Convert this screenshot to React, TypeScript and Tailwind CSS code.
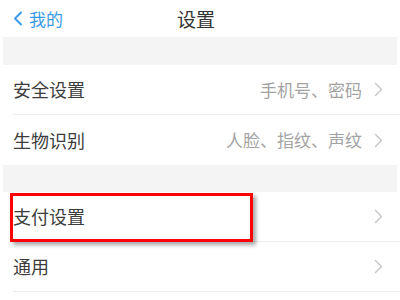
import React from 'react';

interface RowProps {
  label: string;
  value?: string;
  divider?: boolean;
}

const Chevron = () => (
  <svg width="9" height="15" viewBox="0 0 9 15" fill="none" className="shrink-0">
    <path d="M1.5 1.5 L7.5 7.5 L1.5 13.5" stroke="#c4c4c4" strokeWidth="1.4" strokeLinecap="round" strokeLinejoin="round" />
  </svg>
);

const Row = ({ label, value, divider = true }: RowProps) => (
  <div className="pl-[13px]">
    <div className={`h-[50px] flex items-center justify-between pr-[17px] ${divider ? 'border-b border-[#ececec]' : ''}`}>
      <span className="text-[18px] text-[#3d3d3d]">{label}</span>
      <div className="flex items-center gap-[12px]">
        {value && <span className="text-[17px] text-[#a3a3a3]">{value}</span>}
        <Chevron />
      </div>
    </div>
  </div>
);

const Gap = ({ h }: { h: string }) => <div className={`mx-[3px] bg-[#f4f4f4] ${h}`} />;

export default function App() {
  return (
    <div
      className="relative w-[400px] h-[300px] bg-white overflow-hidden"
      style={{ fontFamily: '"Noto Sans CJK SC", "Noto Sans", sans-serif' }}
    >
      {/* nav bar */}
      <div className="h-[37px] flex items-center justify-between px-[13px]">
        <div className="flex items-center gap-[6px] text-[#3b9be8] w-[80px]">
          <svg width="10" height="15" viewBox="0 0 10 15" fill="none">
            <path d="M8 1.5 L2 7.5 L8 13.5" stroke="#3b9be8" strokeWidth="2" strokeLinecap="round" strokeLinejoin="round" />
          </svg>
          <span className="text-[17px] leading-none">我的</span>
        </div>
        <span className="text-[19px] text-[#333] leading-none -ml-[8px]">设置</span>
        <div className="w-[80px]" />
      </div>

      <Gap h="h-[28px]" />
      <Row label="安全设置" value="手机号、密码" />
      <Row label="生物识别" value="人脸、指纹、声纹" divider={false} />
      <Gap h="h-[27px]" />
      <Row label="支付设置" />
      <Row label="通用" />

      {/* annotation box */}
      <div className="absolute left-[10px] top-[193px] w-[243px] h-[49px] border-[3px] border-[#ff0000] shadow-[3px_3px_4px_rgba(0,0,0,0.35)]" />
    </div>
  );
}
